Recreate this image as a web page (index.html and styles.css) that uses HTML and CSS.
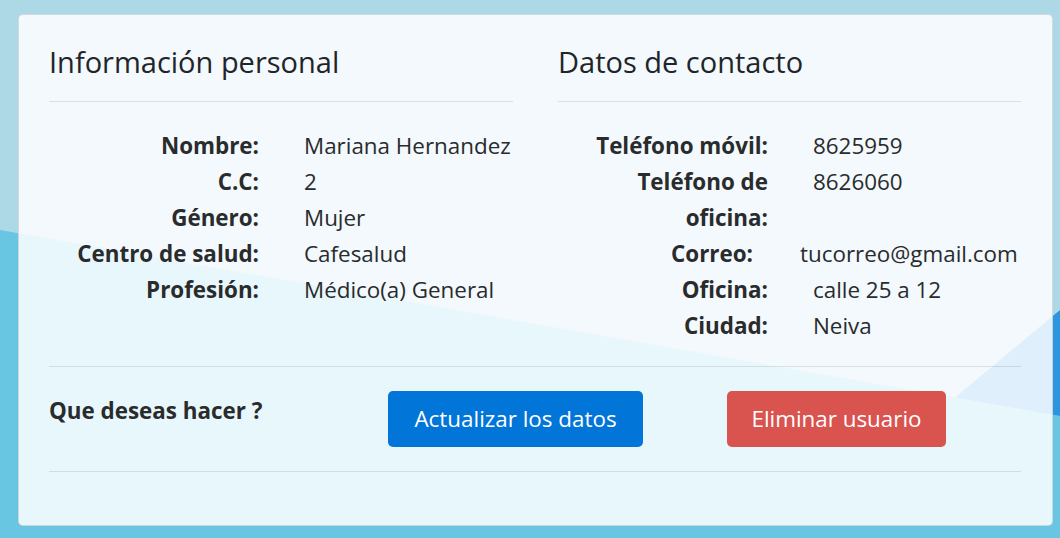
FILE: index.html
```html
<!DOCTYPE html>
<html lang="es">
<head>
<meta charset="utf-8">
<title>Perfil de usuario</title>
<link rel="stylesheet" href="styles.css">
</head>
<body>
<main class="card">
  <div class="columns">
    <section class="panel">
      <h3 class="panel-title">Información personal</h3>
      <hr class="rule rule-title">
      <dl class="info">
        <div class="info-row"><dt>Nombre:</dt><dd>Mariana Hernandez</dd></div>
        <div class="info-row"><dt>C.C:</dt><dd>2</dd></div>
        <div class="info-row"><dt>Género:</dt><dd>Mujer</dd></div>
        <div class="info-row"><dt>Centro de salud:</dt><dd>Cafesalud</dd></div>
        <div class="info-row"><dt>Profesión:</dt><dd>Médico(a) General</dd></div>
      </dl>
    </section>
    <section class="panel">
      <h3 class="panel-title">Datos de contacto</h3>
      <hr class="rule rule-title">
      <dl class="info">
        <div class="info-row"><dt>Teléfono móvil:</dt><dd>8625959</dd></div>
        <div class="info-row"><dt>Teléfono de oficina:</dt><dd>8626060</dd></div>
        <div class="info-row info-row-wide"><dt>Correo:</dt><dd>tucorreo@gmail.com</dd></div>
        <div class="info-row"><dt>Oficina:</dt><dd>calle 25 a 12</dd></div>
        <div class="info-row"><dt>Ciudad:</dt><dd>Neiva</dd></div>
      </dl>
    </section>
  </div>
  <hr class="rule rule-mid">
  <div class="actions">
    <p class="actions-label">Que deseas hacer ?</p>
    <button class="btn btn-primary" type="button">Actualizar los datos</button>
    <button class="btn btn-danger" type="button">Eliminar usuario</button>
  </div>
  <hr class="rule rule-bottom">
</main>
</body>
</html>
```
FILE: styles.css
```css
html, body {
  margin: 0;
  padding: 0;
  height: 538px;
}

body {
  font-family: "Open Sans", "Noto Sans", sans-serif;
  color: #292b2c;
  background-color: #add8e6;
  background-image: url("data:image/svg+xml,%3Csvg xmlns='http://www.w3.org/2000/svg' width='1060' height='538' viewBox='0 0 1060 538' preserveAspectRatio='none'%3E%3Crect width='1060' height='538' fill='%23add8e6'/%3E%3Cpolygon points='0,230 1060,416 1060,538 0,538' fill='%2368c6e2'/%3E%3Cpolygon points='955,397.6 1060,310 1060,416' fill='%232b95e0'/%3E%3C/svg%3E");
  background-size: 1060px 538px;
  background-repeat: no-repeat;
  overflow: hidden;
  padding-top: 14px;
  box-sizing: border-box;
}

.card {
  display: block;
  box-sizing: border-box;
  width: 1035px;
  height: 512px;
  margin-left: 18px;
  padding: 30px 31px 30px 30px;
  background: rgba(255, 255, 255, 0.85);
  border: 1px solid rgba(0, 0, 0, 0.125);
  border-radius: 5px;
}

.columns {
  display: grid;
  grid-template-columns: 464px 463px;
  column-gap: 45px;
}

.panel-title {
  margin: 0;
  font-size: 29px;
  font-weight: 500;
  line-height: 34px;
  color: #212529;
}

.rule {
  border: 0;
  border-top: 1px solid rgba(0, 0, 0, 0.1);
  height: 0;
  margin: 0;
}

.rule-title {
  margin-top: 22px;
  margin-bottom: 26px;
}

.rule-mid {
  margin-top: 22px;
  margin-bottom: 24px;
}

.rule-bottom {
  margin-top: 24px;
}

.info {
  margin: 0;
  font-size: 22.4px;
  line-height: 36px;
}

.info-row {
  display: grid;
  grid-template-columns: 210px 1fr;
  column-gap: 45px;
}

.info-row-wide {
  grid-template-columns: 195px 1fr;
  column-gap: 47px;
}

.info-row dt {
  font-weight: 700;
  text-align: right;
}

.info-row dd {
  margin: 0;
  white-space: nowrap;
}

.actions {
  display: flex;
  align-items: flex-start;
}

.actions-label {
  margin: 0;
  width: 339px;
  flex: none;
  padding-top: 2px;
  font-size: 22.4px;
  font-weight: 700;
  line-height: 36px;
}

.btn {
  flex: none;
  box-sizing: border-box;
  border: 0;
  border-radius: 5px;
  padding: 10px 0 10px;
  font-family: inherit;
  font-size: 22.4px;
  line-height: 36px;
  text-align: center;
  color: #fff;
  cursor: pointer;
}

.btn-primary {
  width: 255px;
  background: #0275d8;
}

.btn-danger {
  width: 219px;
  margin-left: 84px;
  background: #d9534f;
}
```
